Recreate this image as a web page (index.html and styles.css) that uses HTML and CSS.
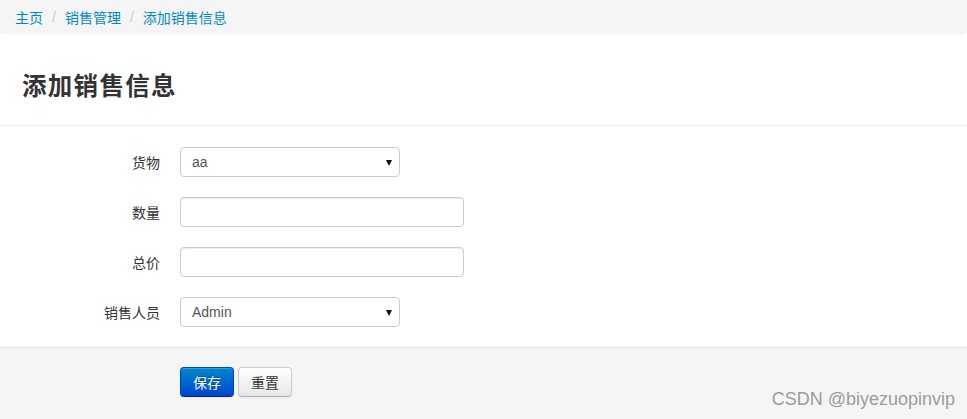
FILE: index.html
```html
<!DOCTYPE html>
<html lang="zh-CN">
<head>
<meta charset="utf-8">
<title>添加销售信息</title>
<link rel="stylesheet" href="styles.css">
</head>
<body>
<div class="page">
  <ul class="breadcrumb">
    <li><a href="#">主页</a><span class="divider">/</span></li>
    <li><a href="#">销售管理</a><span class="divider">/</span></li>
    <li><a href="#">添加销售信息</a></li>
  </ul>
  <div class="page-header">
    <h3 class="title">添加销售信息</h3>
  </div>
  <form class="form-horizontal">
    <div class="control-group">
      <label class="control-label">货物</label>
      <div class="controls">
        <span class="select-wrap"><select class="select"><option>aa</option></select></span>
      </div>
    </div>
    <div class="control-group">
      <label class="control-label">数量</label>
      <div class="controls"><input class="input input-xlarge" type="text"></div>
    </div>
    <div class="control-group">
      <label class="control-label">总价</label>
      <div class="controls"><input class="input input-xlarge" type="text"></div>
    </div>
    <div class="control-group">
      <label class="control-label">销售人员</label>
      <div class="controls">
        <span class="select-wrap"><select class="select"><option>Admin</option></select></span>
      </div>
    </div>
    <div class="form-actions">
      <button type="button" class="btn btn-primary">保存</button>
      <button type="button" class="btn">重置</button>
    </div>
  </form>
  <div class="watermark">CSDN @biyezuopinvip</div>
</div>
</body>
</html>
```
FILE: styles.css
```css
* { box-sizing: border-box; }
html, body { margin: 0; padding: 0; background: #fff; }
body {
  font-family: "Microsoft YaHei", "Noto Sans CJK SC", "Liberation Sans", sans-serif;
  font-size: 14px;
  line-height: 20px;
  color: #333;
}
.page { position: relative; width: 967px; height: 419px; overflow: hidden; }

.breadcrumb {
  list-style: none;
  margin: 0;
  height: 34px;
  padding: 7px 15px;
  background: #f5f5f5;
  border-radius: 0 0 4px 4px;
  display: flex;
}
.breadcrumb li { display: flex; }
.breadcrumb a { color: #0088cc; text-decoration: none; }
.breadcrumb .divider { color: #ccc; padding: 0 9px 0 9px; font-family: "Liberation Sans", sans-serif; }

.page-header {
  padding: 31px 22px 20px;
  border-bottom: 1px solid #eeeeee;
}
.title {
  margin: 0;
  font-size: 24.5px;
  line-height: 40px;
  font-weight: bold;
  color: #333;
  letter-spacing: 1.3px;
}

.form-horizontal { margin: 0; padding-top: 21px; }
.control-group { display: flex; align-items: center; margin-bottom: 20px; height: 30px; }
.control-label { width: 160px; text-align: right; padding-top: 0; }
.controls { margin-left: 20px; display: flex; }

.select-wrap { position: relative; display: inline-block; }
.select-wrap::after {
  content: "";
  position: absolute;
  right: 8px;
  top: 13px;
  border-left: 3.5px solid transparent;
  border-right: 3.5px solid transparent;
  border-top: 6px solid #111;
  pointer-events: none;
}
.select {
  -webkit-appearance: none;
  appearance: none;
  width: 220px;
  height: 30px;
  padding: 4px 11px;
  font-family: "Liberation Sans", Arial, sans-serif;
  font-size: 14px;
  color: #555;
  background: #fff;
  border: 1px solid #ccc;
  border-radius: 4px;
  outline: none;
}
.input {
  height: 30px;
  padding: 4px 6px;
  font-size: 14px;
  color: #555;
  background: #fff;
  border: 1px solid #ccc;
  border-radius: 4px;
  box-shadow: inset 0 1px 1px rgba(0,0,0,0.075);
  outline: none;
}
.input-xlarge { width: 284px; }

.form-actions {
  margin-top: 0;
  padding: 19px 20px 20px 180px;
  height: 80px;
  background: #f5f5f5;
  border-top: 1px solid #e5e5e5;
  display: flex;
  gap: 4px;
}
.btn {
  height: 30px;
  padding: 4px 12px;
  font-family: "Microsoft YaHei", "Noto Sans CJK SC", sans-serif;
  font-size: 14px;
  line-height: 20px;
  color: #333;
  text-shadow: 0 1px 1px rgba(255,255,255,0.75);
  background: linear-gradient(to bottom, #ffffff, #e6e6e6);
  border: 1px solid #cccccc;
  border-bottom-color: #b3b3b3;
  border-radius: 4px;
  box-shadow: inset 0 1px 0 rgba(255,255,255,0.2), 0 1px 2px rgba(0,0,0,0.05);
  cursor: pointer;
}
.btn-primary {
  color: #fff;
  text-shadow: 0 -1px 0 rgba(0,0,0,0.25);
  background: linear-gradient(to bottom, #0088cc, #0044cc);
  border-color: #0044cc #0044cc #002a80;
}

.watermark {
  position: absolute;
  right: 12px;
  bottom: 9px;
  font-family: "Liberation Sans", Arial, sans-serif;
  font-size: 18px;
  line-height: 22px;
  color: #9a9a9a;
  text-shadow: 0 0 1px #fff;
}
```
